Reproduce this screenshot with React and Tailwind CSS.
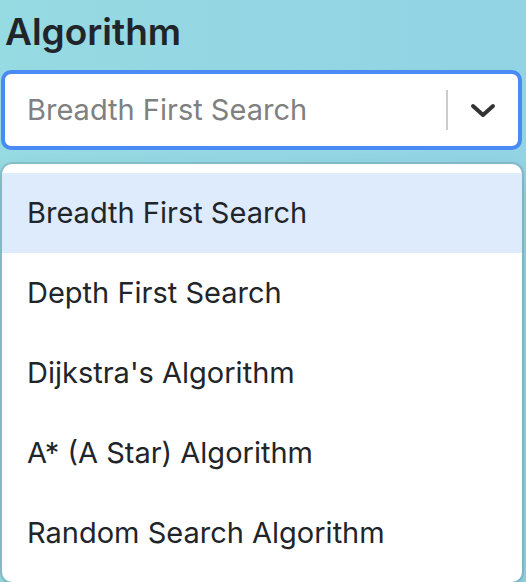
import React from "react";

const options = [
  "Breadth First Search",
  "Depth First Search",
  "Dijkstra's Algorithm",
  "A* (A Star) Algorithm",
  "Random Search Algorithm",
];

const App = () => {
  return (
    <div className="h-[582px] w-[526px] overflow-hidden bg-gradient-to-r from-[#96dae2] to-[#92d3e4] px-[1px] font-['Inter',sans-serif] text-[#212529]">
      {/* Label */}
      <h2 className="pl-[4px] pt-[10px] text-[37px] font-semibold leading-[44px]">
        Algorithm
      </h2>

      {/* Select control */}
      <div className="mt-[16px] mr-[3px] flex h-[80px] items-center rounded-[10px] border-4 border-[#4a8af4] bg-white">
        <div className="flex-1 pl-[22px] text-[29px] text-[#808080]">
          Breadth First Search
        </div>
        <div className="h-[40px] w-[2px] bg-[#cccccc]" />
        <div className="flex w-[70px] items-center justify-center">
          <svg width="26" height="16" viewBox="0 0 26 16" fill="none">
            <path
              d="M3 4l10 9 10-9"
              stroke="#333333"
              strokeWidth="4"
              strokeLinecap="round"
              strokeLinejoin="round"
            />
          </svg>
        </div>
      </div>

      {/* Menu */}
      <div className="mt-[14px] mr-[3px] ml-[1px] rounded-[10px] bg-white py-[9px] shadow-[0_0_0_2px_rgba(0,0,0,0.1),0_6px_18px_rgba(0,0,0,0.1)]">
        {options.map((opt, i) => (
          <div
            key={opt}
            className={`flex h-[80px] items-center pl-[25px] text-[29px] ${
              i === 0 ? "bg-[#deebfc]" : ""
            }`}
          >
            {opt}
          </div>
        ))}
      </div>
    </div>
  );
};

export default App;
